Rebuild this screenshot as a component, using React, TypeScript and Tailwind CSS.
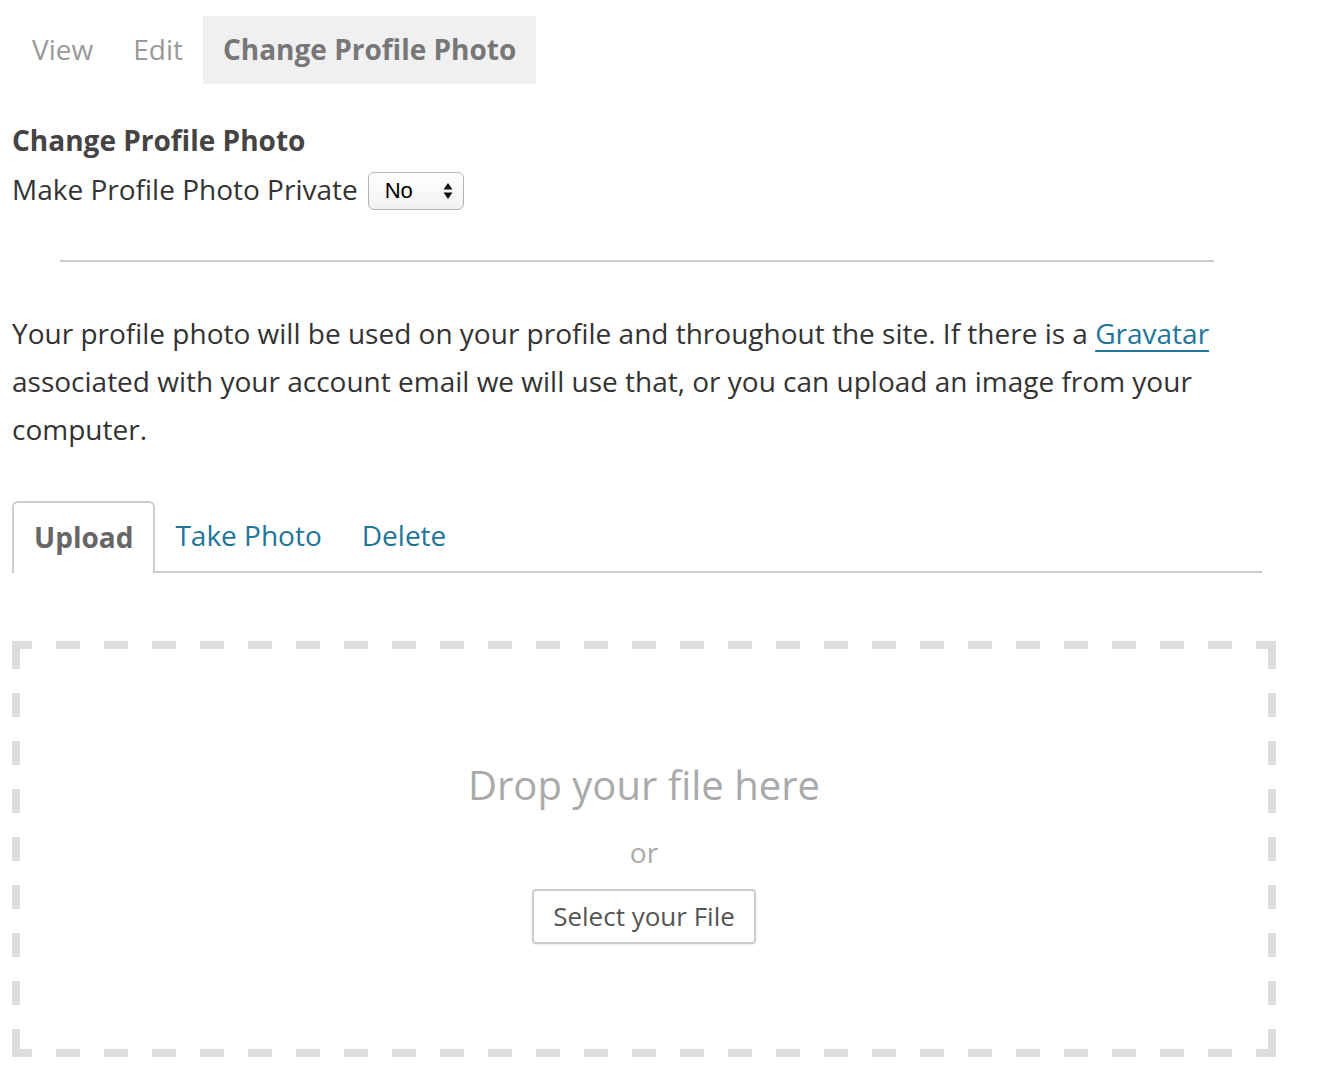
import React from "react";

export default function App() {
  return (
    <div className="min-h-[1080px] bg-white font-['Open_Sans',sans-serif] text-[#444]">
      <div className="pl-[12px] pt-[16px]">
        <nav className="flex h-[68px] items-center text-[28px]">
          <a className="flex h-full items-center px-[20px] pb-[2px] text-[#999]">View</a>
          <a className="flex h-full items-center px-[20px] pb-[2px] text-[#999]">Edit</a>
          <a className="flex h-full items-center bg-[#f0f0f0] px-[20px] pb-[2px] font-bold text-[#777]">Change Profile Photo</a>
        </nav>

        <h2 className="mt-[36px] text-[28px] font-bold leading-[40px] text-[#444]">Change Profile Photo</h2>
        <div className="mt-[8px] flex items-center text-[28px] leading-[40px] text-[#333]">
          <span>Make Profile Photo Private</span>
          <div className="mt-[4px] ml-[10px] flex h-[38px] w-[96px] items-center justify-between rounded-[6px] border border-[#b4b4b4] bg-gradient-to-b from-white to-[#f1f1f1] pl-[16px] pr-[10px] font-['Liberation_Sans',sans-serif] text-[22px] text-black">
            <span>No</span>
            <svg width="10" height="18" viewBox="0 0 10 18">
              <path d="M5 1 L9.5 7.5 H0.5 Z" fill="#111" />
              <path d="M5 17 L9.5 10.5 H0.5 Z" fill="#111" />
            </svg>
          </div>
        </div>

        <hr className="mr-[112px] ml-[48px] mt-[50px] border-t-2 border-[#ccc]" />

        <p className="mt-[47px] pr-[100px] text-[28px] leading-[48px] text-[#333]">
          Your profile photo will be used on your profile and throughout the site. If there is a{" "}
          <a className="text-[#21759b] underline decoration-2 underline-offset-[6px]">Gravatar</a> associated with your account email we will use that, or you can upload an image from your computer.
        </p>

        <div className="mt-[48px] mr-[64px] flex border-b-2 border-[#ccc] text-[28px]">
          <div className="-mb-[2px] flex h-[72px] items-center rounded-t-[6px] border-2 border-b-0 border-[#ccc] bg-white px-[20px] pb-[2px] font-bold text-[#666]">Upload</div>
          <a className="flex h-[70px] items-center px-[20px] pb-[2px] text-[#21759b]">Take Photo</a>
          <a className="flex h-[70px] items-center px-[20px] pb-[2px] text-[#21759b]">Delete</a>
        </div>

        <div className="mt-[68px] mr-[50px] flex h-[416px] flex-col items-center pt-[118px] [background-image:linear-gradient(to_right,#ddd_24px,transparent_24px),linear-gradient(to_right,#ddd_24px,transparent_24px),linear-gradient(to_bottom,#ddd_24px,transparent_24px),linear-gradient(to_bottom,#ddd_24px,transparent_24px)] [background-size:48px_8px,48px_8px,8px_48px,8px_48px] [background-position:-4px_0,-4px_100%,0_4px,100%_4px] [background-repeat:repeat-x,repeat-x,repeat-y,repeat-y]">
          <div className="text-[40px] leading-[52px] text-[#aaa]">Drop your file here</div>
          <div className="mt-[21px] text-[28px] leading-[40px] text-[#aaa]">or</div>
          <button className="mt-[17px] h-[55px] w-[224px] rounded-[4px] border-2 border-[#ccc] bg-white text-[26px] text-[#555] shadow-[0_1px_2px_rgba(0,0,0,0.08)]">Select your File</button>
        </div>
      </div>
    </div>
  );
}
